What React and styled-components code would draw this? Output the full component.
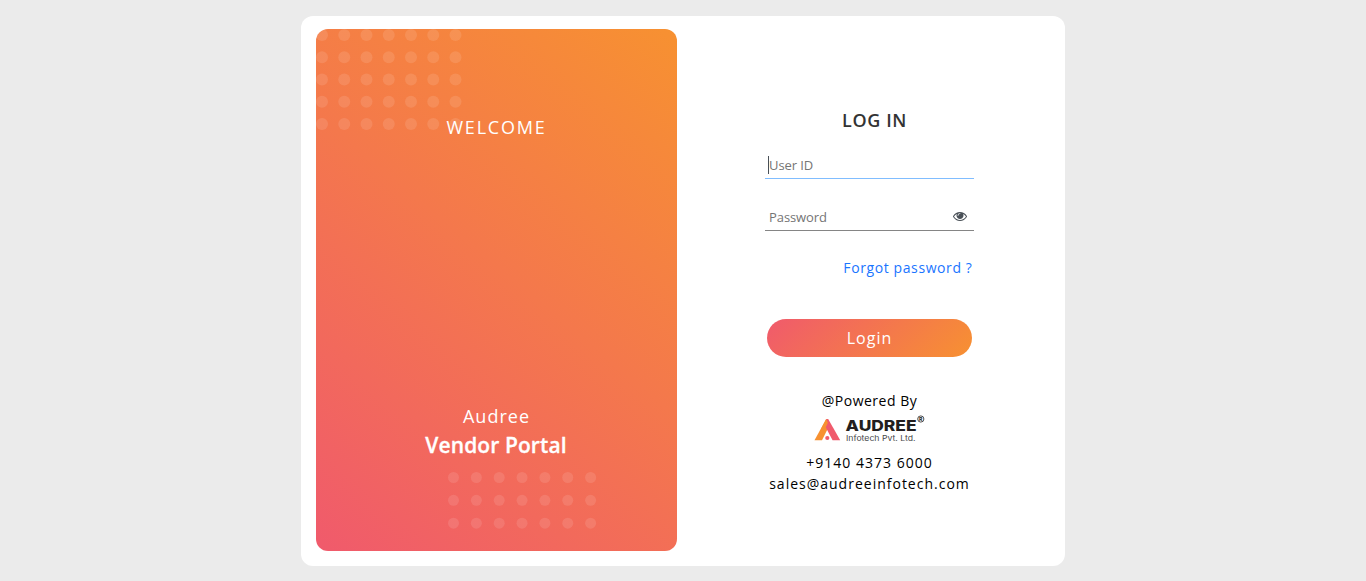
import React from "react";
import styled, { createGlobalStyle } from "styled-components";

const GlobalStyle = createGlobalStyle`
  * { box-sizing: border-box; }
  body {
    margin: 0;
    background: #ebebeb;
    font-family: "Open Sans", "Noto Sans", sans-serif;
    overflow: hidden;
  }
`;

const Page = styled.main`
  display: flex;
  justify-content: center;
  height: 581px;
  padding-top: 16px;
`;

const Card = styled.section`
  display: flex;
  width: 764px;
  height: 550px;
  padding: 13px 15px 15px;
  background: #fff;
  border-radius: 12px;
`;

const Welcome = styled.div`
  position: relative;
  display: flex;
  flex-direction: column;
  justify-content: space-between;
  align-items: center;
  width: 361px;
  height: 522px;
  padding: 86px 0 90px;
  overflow: hidden;
  border-radius: 12px;
  color: #fff;
  text-align: center;
  background: linear-gradient(40deg, #f05a6c, #f4784c 53%, #f79131);
`;

const Dots = styled.svg`
  position: absolute;
  left: ${(p) => p.$left}px;
  top: ${(p) => p.$top}px;
  fill: #fff;
  fill-opacity: ${(p) => p.$alpha};
`;

const WelcomeTitle = styled.h2`
  position: relative;
  margin: 0;
  font-size: 18px;
  line-height: 24px;
  font-weight: 400;
  letter-spacing: 1.8px;
`;

const Product = styled.div`
  position: relative;
  font-size: 18px;
  line-height: 28px;
  letter-spacing: 1px;
`;

const ProductName = styled.div`
  margin-right: 1px;
  font-size: 21px;
  line-height: 31px;
  font-weight: 600;
  letter-spacing: 0.1px;
  -webkit-text-stroke: 0.3px #fff;
`;

const Form = styled.form`
  display: flex;
  flex-direction: column;
  width: 209px;
  margin-left: 88px;
  padding-top: 79px;
`;

const Heading = styled.h1`
  margin: 0 0 19px 10px;
  color: #333;
  font-size: 18px;
  line-height: 25px;
  font-weight: 600;
  letter-spacing: 0.6px;
  text-align: center;
`;

const Field = styled.label`
  display: flex;
  align-items: center;
  height: 27px;
  margin-bottom: 25px;
  padding: 0 7.5px 0 3px;
  border-bottom: 1px solid ${(p) => (p.$active ? "#80bdff" : "#858585")};
`;

const Caret = styled.span`
  width: 1px;
  height: 18px;
  margin-right: -1px;
  background: #495057;
`;

const Placeholder = styled.span`
  flex: 1;
  padding-left: 1px;
  color: #757575;
  font-size: 13px;
  line-height: 18px;
  letter-spacing: -0.08px;
`;

const Eye = styled.svg`
  width: 14px;
  height: 14px;
  margin-top: -3px;
  fill: #495057;
`;

const Forgot = styled.a`
  align-self: flex-end;
  margin-right: 1.5px;
  color: #1a75ff;
  font-size: 14px;
  line-height: 24px;
  letter-spacing: 0.6px;
`;

const Submit = styled.button`
  height: 38px;
  margin: 39px 2px 33px;
  padding: 0;
  border: 0;
  border-radius: 19px;
  color: #fff;
  font: 400 16px/38px "Open Sans", sans-serif;
  letter-spacing: 1px;
  background: linear-gradient(135deg, #f05a6c, #f79131);
`;

const Contact = styled.div`
  display: flex;
  flex-direction: column;
  align-items: center;
  color: #000;
  font-size: 14px;
  line-height: 21px;
  letter-spacing: ${(p) => p.$spacing}px;
  white-space: nowrap;
`;

const Logo = styled.svg`
  display: block;
  align-self: center;
  width: 112px;
  height: 32px;
  margin: 2px 0 7px;
`;

function DotGrid({ rows, pitch, radius, left, top, alpha }) {
  const dots = [];
  for (let r = 0; r < rows; r++)
    for (let c = 0; c < 7; c++)
      dots.push(
        <circle key={`${r}-${c}`} cx={radius + c * pitch} cy={radius + r * pitch} r={radius} />
      );
  return (
    <Dots
      $left={left}
      $top={top}
      $alpha={alpha}
      width={6 * pitch + 2 * radius + 1}
      height={(rows - 1) * pitch + 2 * radius + 1}
      aria-hidden="true"
    >
      {dots}
    </Dots>
  );
}

function AudreeLogo() {
  return (
    <Logo viewBox="0 0 112 32" aria-label="Audree Infotech">
      <path d="M12.2 6.1L15.4 12.6L8 27.3H.5Z" fill="#f79131" />
      <path d="M12.2 6.1H14.2L26.2 27.3H18.6L11.4 13.8Z" fill="#f05a6c" />
      <path d="M12.2 6.1L13.9 9.8L9.2 19.6L7.2 15.5Z" fill="#f79131" />
      <circle cx="13.3" cy="25" r="2.1" fill="#f05a6c" />
      <text x="31.6" y="18.1" fontFamily="Inter" fontWeight="800" fontSize="14.4" fill="#231f20" textLength="71" lengthAdjust="spacingAndGlyphs">AUDREE</text>
      <text x="32" y="27.8" fontFamily="Inter" fontWeight="400" fontSize="7.5" fill="#454547" textLength="69.5" lengthAdjust="spacingAndGlyphs">Infotech Pvt. Ltd.</text>
      <circle cx="106.8" cy="6" r="3.1" fill="none" stroke="#231f20" strokeWidth=".8" />
      <text x="105.1" y="8" fontFamily="Inter" fontWeight="700" fontSize="5.2" fill="#231f20">R</text>
    </Logo>
  );
}

export default function App() {
  return (
    <>
      <GlobalStyle />
      <Page>
        <Card>
          <Welcome>
            <DotGrid rows={5} pitch={22.25} radius={6} left={0} top={0} alpha={0.11} />
            <DotGrid rows={3} pitch={22.85} radius={5.5} left={132} top={443} alpha={0.11} />
            <WelcomeTitle>WELCOME</WelcomeTitle>
            <Product>
              Audree
              <ProductName>Vendor Portal</ProductName>
            </Product>
          </Welcome>
          <Form onSubmit={(e) => e.preventDefault()}>
            <Heading>LOG IN</Heading>
            <Field $active>
              <Caret />
              <Placeholder>User ID</Placeholder>
            </Field>
            <Field>
              <Placeholder>Password</Placeholder>
              <Eye viewBox="0 0 1792 1792" aria-label="Show password">
                <path d="M1664 960q-152-236-381-353 61 104 61 225 0 185-131.5 316.5t-316.5 131.5-316.5-131.5-131.5-316.5q0-121 61-225-229 117-381 353 133 205 333.5 326.5t434.5 121.5 434.5-121.5 333.5-326.5zm-720-384q0-20-14-34t-34-14q-125 0-214.5 89.5t-89.5 214.5q0 20 14 34t34 14 34-14 14-34q0-86 61-147t147-61q20 0 34-14t14-34zm848 384q0 34-20 69-140 230-376.5 368.5t-499.5 138.5-499.5-139-376.5-368q-20-35-20-69t20-69q140-229 376.5-368t499.5-139 499.5 139 376.5 368q20 35 20 69z" />
              </Eye>
            </Field>
            <Forgot>Forgot password ?</Forgot>
            <Submit>Login</Submit>
            <Contact $spacing={0.5}>@Powered By</Contact>
            <AudreeLogo />
            <Contact $spacing={1}>
              <span>+9140 4373 6000</span>
              <span>sales@audreeinfotech.com</span>
            </Contact>
          </Form>
        </Card>
      </Page>
    </>
  );
}
